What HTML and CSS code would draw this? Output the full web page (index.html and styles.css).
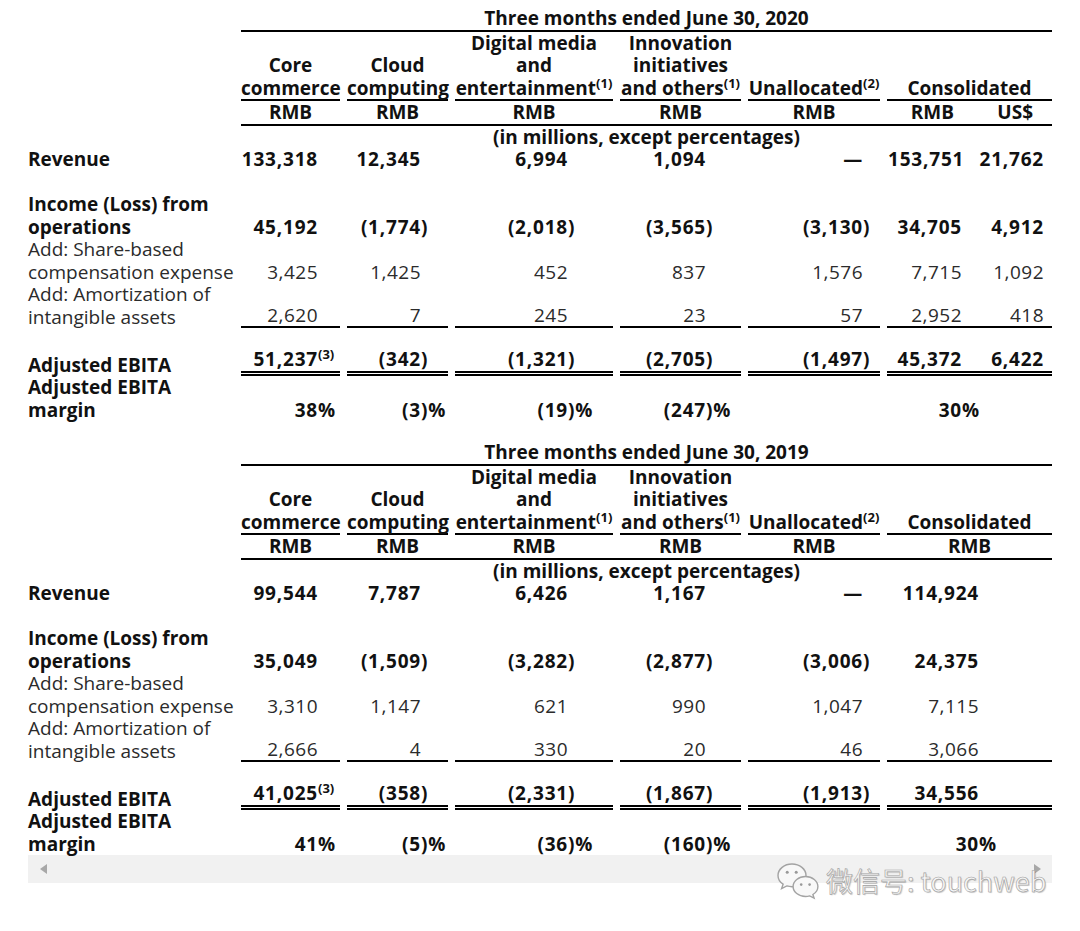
FILE: index.html
```html
<!DOCTYPE html>
<html lang="en">
<head>
<meta charset="utf-8">
<title>Adjusted EBITA by segment</title>
<link rel="stylesheet" href="styles.css">
</head>
<body>
<div class="page">
  <table class="fin t1">
    <colgroup>
      <col class="c-lbl"><col class="c-1"><col class="c-2"><col class="c-3"><col class="c-4"><col class="c-5"><col class="c-6">
    </colgroup>
    <tr class="r-title"><td></td><td colspan="6" class="title">Three months ended June 30, 2020</td></tr>
    <tr class="r-head"><td></td>
      <td class="hd">Core<br>commerce</td>
      <td class="hd">Cloud<br>computing</td>
      <td class="hd">Digital media<br>and<br>entertainment<sup>(1)</sup></td>
      <td class="hd">Innovation<br>initiatives<br>and others<sup>(1)</sup></td>
      <td class="hd">Unallocated<sup>(2)</sup></td>
      <td class="hd">Consolidated</td>
    </tr>
    <tr class="r-cur"><td></td><td>RMB</td><td>RMB</td><td>RMB</td><td>RMB</td><td>RMB</td><td class="cons"><span class="ca">RMB</span><span class="cb">US$</span></td></tr>
    <tr class="r-unit"><td></td><td colspan="6" class="unit">(in millions, except percentages)</td></tr>
    <tr class="v b"><td>Revenue</td><td>133,318</td><td>12,345</td><td>6,994</td><td>1,094</td><td>—</td><td class="cons"><span class="ca">153,751</span><span class="cb">21,762</span></td></tr>
    <tr class="gap"><td colspan="7"></td></tr>
    <tr class="v b"><td>Income (Loss) from<br>operations</td><td>45,192</td><td>(1,774<span class="h">)</span></td><td>(2,018<span class="h">)</span></td><td>(3,565<span class="h">)</span></td><td>(3,130<span class="h">)</span></td><td class="cons"><span class="ca">34,705</span><span class="cb">4,912</span></td></tr>
    <tr class="v rg"><td>Add: Share-based<br>compensation expense</td><td>3,425</td><td>1,425</td><td>452</td><td>837</td><td>1,576</td><td class="cons"><span class="ca">7,715</span><span class="cb">1,092</span></td></tr>
    <tr class="v rg under"><td>Add: Amortization of<br>intangible assets</td><td>2,620</td><td>7</td><td>245</td><td>23</td><td>57</td><td class="cons"><span class="ca">2,952</span><span class="cb">418</span></td></tr>
    <tr class="gap gap-s"><td colspan="7"></td></tr>
    <tr class="v b dbl"><td>Adjusted EBITA</td><td>51,237<span class="h"><sup>(3)</sup></span></td><td>(342<span class="h">)</span></td><td>(1,321<span class="h">)</span></td><td>(2,705<span class="h">)</span></td><td>(1,497<span class="h">)</span></td><td class="cons"><span class="ca">45,372</span><span class="cb">6,422</span></td></tr>
    <tr class="v b"><td>Adjusted EBITA<br>margin</td><td>38<span class="h">%</span></td><td>(3<span class="h">)%</span></td><td>(19<span class="h">)%</span></td><td>(247<span class="h">)%</span></td><td></td><td class="cons"><span class="ca">30<span class="h">%</span></span><span class="cb"></span></td></tr>
  </table>

  <table class="fin t2">
    <colgroup>
      <col class="c-lbl"><col class="c-1"><col class="c-2"><col class="c-3"><col class="c-4"><col class="c-5"><col class="c-6">
    </colgroup>
    <tr class="r-title"><td></td><td colspan="6" class="title">Three months ended June 30, 2019</td></tr>
    <tr class="r-head"><td></td>
      <td class="hd">Core<br>commerce</td>
      <td class="hd">Cloud<br>computing</td>
      <td class="hd">Digital media<br>and<br>entertainment<sup>(1)</sup></td>
      <td class="hd">Innovation<br>initiatives<br>and others<sup>(1)</sup></td>
      <td class="hd">Unallocated<sup>(2)</sup></td>
      <td class="hd">Consolidated</td>
    </tr>
    <tr class="r-cur"><td></td><td>RMB</td><td>RMB</td><td>RMB</td><td>RMB</td><td>RMB</td><td>RMB</td></tr>
    <tr class="r-unit"><td></td><td colspan="6" class="unit">(in millions, except percentages)</td></tr>
    <tr class="v b"><td>Revenue</td><td>99,544</td><td>7,787</td><td>6,426</td><td>1,167</td><td>—</td><td>114,924</td></tr>
    <tr class="gap"><td colspan="7"></td></tr>
    <tr class="v b"><td>Income (Loss) from<br>operations</td><td>35,049</td><td>(1,509<span class="h">)</span></td><td>(3,282<span class="h">)</span></td><td>(2,877<span class="h">)</span></td><td>(3,006<span class="h">)</span></td><td>24,375</td></tr>
    <tr class="v rg"><td>Add: Share-based<br>compensation expense</td><td>3,310</td><td>1,147</td><td>621</td><td>990</td><td>1,047</td><td>7,115</td></tr>
    <tr class="v rg under"><td>Add: Amortization of<br>intangible assets</td><td>2,666</td><td>4</td><td>330</td><td>20</td><td>46</td><td>3,066</td></tr>
    <tr class="gap gap-s"><td colspan="7"></td></tr>
    <tr class="v b dbl"><td>Adjusted EBITA</td><td>41,025<span class="h"><sup>(3)</sup></span></td><td>(358<span class="h">)</span></td><td>(2,331<span class="h">)</span></td><td>(1,867<span class="h">)</span></td><td>(1,913<span class="h">)</span></td><td>34,556</td></tr>
    <tr class="v b"><td>Adjusted EBITA<br>margin</td><td>41<span class="h">%</span></td><td>(5<span class="h">)%</span></td><td>(36<span class="h">)%</span></td><td>(160<span class="h">)%</span></td><td></td><td>30<span class="h">%</span></td></tr>
  </table>

  <div class="scrollbar"><span class="arrow left"></span><span class="arrow right"></span></div>
</div>

<div class="watermark">
  <svg class="wx" width="44" height="38" viewBox="0 0 44 38" aria-hidden="true">
    <path d="M16 2C8.3 2 2 7.1 2 13.4c0 3.6 2 6.7 5.1 8.8L5.6 26.6l5.2-2.7c1.6.5 3.4.8 5.2.8 7.7 0 14-5.1 14-11.3S23.7 2 16 2z" fill="#f8f8f8" stroke="#a3a3a3" stroke-width="1.4"/>
    <circle cx="11.2" cy="10.2" r="1.5" fill="#999"/>
    <circle cx="20.2" cy="10.2" r="1.5" fill="#999"/>
    <path d="M29.5 14.5c-6.9 0-12.4 4.5-12.4 10s5.5 10 12.4 10c1.5 0 2.9-.2 4.2-.6l4.4 2.3-1.2-3.7c3-1.8 5-4.7 5-8 0-5.5-5.5-10-12.4-10z" fill="#f8f8f8" stroke="#a3a3a3" stroke-width="1.4"/>
    <circle cx="25.2" cy="22.6" r="1.3" fill="#999"/>
    <circle cx="33.6" cy="22.6" r="1.3" fill="#999"/>
  </svg>
  <span class="wm-text">微信号: touchweb</span>
</div>
</body>
</html>
```

FILE: styles.css
```css
html, body {
  margin: 0;
  padding: 0;
  background: #ffffff;
}

body {
  position: relative;
  width: 1080px;
  height: 931px;
  overflow: hidden;
  font-family: "Open Sans", "Liberation Sans", Arial, sans-serif;
  color: #111111;
}

.page {
  padding: 7px 0 0 21px;
}

.fin {
  border-collapse: separate;
  border-spacing: 7px 0;
  table-layout: fixed;
  width: 1038px;
  font-size: 19px;
  line-height: 22.5px;
  font-weight: 700;
}

.t2 {
  margin-top: 20px;
}

.c-lbl { width: 206px; }
.c-1 { width: 99px; }
.c-2 { width: 101px; }
.c-3 { width: 158px; }
.c-4 { width: 121px; }
.c-5 { width: 132px; }
.c-6 { width: 165px; }

.fin td {
  padding: 0;
  vertical-align: bottom;
  white-space: nowrap;
}

.title {
  text-align: center;
  border-bottom: 2px solid #000;
}

.r-head td.hd {
  text-align: center;
  border-bottom: 2px solid #000;
}

.r-cur td {
  text-align: center;
}

.fin .unit {
  text-align: center;
  border-top: 2px solid #000;
}

sup {
  font-size: 13px;
  line-height: 0;
  vertical-align: 7px;
  letter-spacing: 0;
}

/* value rows */
.v td {
  text-align: right;
}

.v td:first-child {
  text-align: left;
  letter-spacing: 0;
}

.v.b td + td {
  letter-spacing: 0.8px;
}

.v.rg td {
  font-weight: 400;
  color: #2b2b2b;
}

.v.rg td + td {
  letter-spacing: 0.5px;
}

.v td:nth-child(2) { padding-right: 22px; }
.v td:nth-child(3) { padding-right: 27px; }
.v td:nth-child(4) { padding-right: 45px; }
.v td:nth-child(5) { padding-right: 35px; }
.v td:nth-child(6) { padding-right: 17px; }
.v td:nth-child(7) { padding-right: 8px; }
.t2 .v td:nth-child(7) { padding-right: 73px; }

.h {
  display: inline-block;
  width: 0;
  text-align: left;
}

.cons .ca,
.cons .cb {
  display: inline-block;
  box-sizing: border-box;
  text-align: right;
}

.cons .ca { width: 74px; }
.cons .cb { width: 82px; }

.r-cur td.cons {
  text-align: right;
  padding-right: 9px;
}

.r-cur .cons .ca { padding-right: 7px; }
.r-cur .cons .cb { padding-right: 10px; }

.under td + td {
  border-bottom: 2px solid #000;
}

.dbl td + td {
  border-bottom: 5px double #000;
  padding-bottom: 1px;
}

.gap td {
  height: 22.5px;
}

.gap-s td {
  height: 19.5px;
}

/* horizontal scroll track */
.scrollbar {
  display: flex;
  align-items: center;
  justify-content: space-between;
  box-sizing: border-box;
  margin-left: 7px;
  width: 1024px;
  height: 28px;
  padding: 0 11px 0 12px;
  background: #f1f1f1;
}

.arrow {
  width: 0;
  height: 0;
  border-top: 5px solid transparent;
  border-bottom: 5px solid transparent;
}

.arrow.left {
  border-right: 7px solid #a8a8a8;
}

.arrow.right {
  border-left: 7px solid #a8a8a8;
}

/* watermark overlay */
.watermark {
  position: absolute;
  left: 776px;
  top: 862px;
  display: flex;
  align-items: center;
  gap: 6px;
}

.wm-text {
  font-family: "Noto Sans CJK SC", "Noto Sans", sans-serif;
  font-size: 27px;
  line-height: 36px;
  color: #f6f6f6;
  -webkit-text-stroke: 0.6px #a0a0a0;
  text-shadow: 1px 1px 1px rgba(0, 0, 0, 0.2);
}
```
